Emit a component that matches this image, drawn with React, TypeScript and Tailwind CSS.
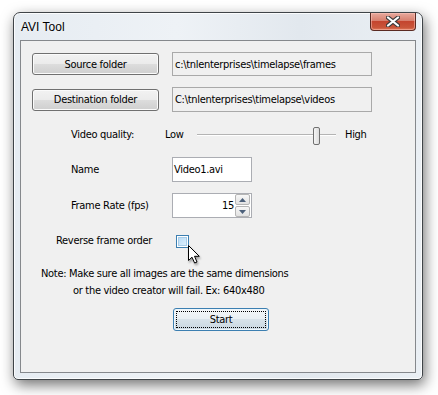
import React from "react";

const btn =
  "flex items-center justify-center pt-[2px] border border-[#707070] rounded-[3px] bg-[linear-gradient(#f2f2f2_0%,#ebebeb_50%,#dddddd_50%,#cfcfcf_100%)] shadow-[inset_0_0_0_1px_#fbfbfb] text-black";

function CloseGlyph() {
  return (
    <svg width="14" height="11" viewBox="0 0 14 11">
      <path
        d="M2 1.5 L12 9.5 M12 1.5 L2 9.5"
        stroke="#3a3a3a"
        strokeWidth="4.2"
        strokeLinecap="round"
        fill="none"
      />
      <path
        d="M2 1.5 L12 9.5 M12 1.5 L2 9.5"
        stroke="#ffffff"
        strokeWidth="2.2"
        strokeLinecap="round"
        fill="none"
      />
    </svg>
  );
}

function Cursor() {
  return (
    <svg
      width="16"
      height="22"
      viewBox="0 0 16 22"
      className="absolute left-[11px] top-[9px] drop-shadow-[1px_2px_1px_rgba(0,0,0,0.35)]"
    >
      <path
        d="M0.5 0.5 L0.5 15.5 L4 12.2 L6.6 18 L9 17 L6.5 11.3 L11.3 11.3 Z"
        fill="#ffffff"
        stroke="#000000"
        strokeWidth="1"
        strokeLinejoin="miter"
      />
    </svg>
  );
}

export default function App() {
  return (
    <div
      className="w-[438px] h-[395px] bg-white overflow-hidden pt-[12px] pl-[13px] text-[11px] tracking-[-0.3px] text-black"
      style={{ fontFamily: '"DejaVu Sans Condensed", "DejaVu Sans", sans-serif', fontStretch: "semi-condensed" }}
    >
      {/* Window */}
      <div className="w-[410px] h-[368px] flex flex-col border border-[#3f4448] rounded-t-[7px] rounded-b-[5px] bg-[linear-gradient(90deg,#e6ecf2_0%,#eef2f6_40%,#e2e8ee_70%,#eaeff4_100%)] shadow-[2px_5px_14px_rgba(0,0,0,0.55),inset_0_0_0_1px_rgba(255,255,255,0.8)] px-[6px]">
        {/* Title bar */}
        <div className="h-[27px] flex items-start justify-between">
          <div
            className="self-center pl-[1px] pt-[1px] text-[12px] leading-[14px] tracking-normal text-black [text-shadow:0_0_6px_#ffffff]"
            style={{ fontFamily: '"Liberation Sans", Arial, sans-serif', fontStretch: "normal" }}
          >
            AVI Tool
          </div>
          <div className="w-[46px] h-[18px] rounded-b-[4px] border border-t-0 border-[#5a2a22] bg-[linear-gradient(#e8a99d_0%,#d7806f_45%,#c4452f_50%,#c9553a_85%,#e07a5c_100%)] shadow-[inset_0_0_0_1px_rgba(255,200,190,0.5)] flex items-center justify-center">
            <CloseGlyph />
          </div>
        </div>

        {/* Client area */}
        <div className="w-[396px] h-[333px] border border-[#85888c] bg-[#f0f0f0] flex flex-col">
          {/* Row 1 */}
          <div className="mt-[11px] h-[24px] flex items-center">
            <div className={`${btn} ml-[11px] w-[127px] h-[22px]`}>Source folder</div>
            <div className="ml-[13px] w-[200px] h-[24px] border border-[#a9a9a9] bg-[#f0f0f0] flex items-center pl-[2px] pt-[2px]">
              c:\tnlenterprises\timelapse\frames
            </div>
          </div>
          {/* Row 2 */}
          <div className="mt-[11px] h-[25px] flex items-center">
            <div className={`${btn} ml-[11px] w-[127px] h-[22px]`}>Destination folder</div>
            <div className="ml-[13px] w-[200px] h-[25px] border border-[#a9a9a9] bg-[#f0f0f0] flex items-center pl-[2px] pt-[2px]">
              C:\tnlenterprises\timelapse\videos
            </div>
          </div>
          {/* Row 3: slider */}
          <div className="mt-[12px] h-[20px] flex items-center">
            <span className="ml-[50px] w-[94px] pt-[2px]">Video quality:</span>
            <span className="w-[32px] pt-[2px]">Low</span>
            <div className="relative w-[139px] h-[20px]">
              <div className="absolute left-0 right-0 top-[10px] h-[2px] border-t border-[#b4b4b4] border-b border-b-[#ffffff]" />
              <div className="absolute left-[116px] top-[3px] w-[7px] h-[18px] rounded-[2px] border border-[#707070] bg-[linear-gradient(90deg,#f4f4f4,#dcdcdc)]" />
            </div>
            <span className="ml-[9px] pt-[2px]">High</span>
          </div>
          {/* Row 4: Name */}
          <div className="mt-[13px] h-[25px] flex items-center">
            <span className="ml-[50px] w-[101px] pt-[2px]">Name</span>
            <div className="w-[80px] h-[25px] border border-[#abadb3] bg-white flex items-center pl-[1px] pt-[2px]">
              Video1.avi
            </div>
          </div>
          {/* Row 5: Frame rate */}
          <div className="mt-[11px] h-[25px] flex items-center">
            <span className="ml-[50px] w-[101px] pt-[2px]">Frame Rate (fps)</span>
            <div className="w-[80px] h-[25px] border border-[#abadb3] bg-white flex items-center">
              <span className="flex-1 text-right pr-[1px] pt-[2px]">15</span>
              <div className="w-[15px] h-[23px] flex flex-col gap-[1px] mr-[1px]">
                <div className="flex-1 border border-[#b5b5b5] rounded-[2px] bg-[linear-gradient(#f7f7f7,#e2e2e2)] flex items-center justify-center">
                  <svg width="7" height="4" viewBox="0 0 7 4">
                    <path d="M0 4 L3.5 0 L7 4 Z" fill="#4c607a" />
                  </svg>
                </div>
                <div className="flex-1 border border-[#b5b5b5] rounded-[2px] bg-[linear-gradient(#f7f7f7,#e2e2e2)] flex items-center justify-center">
                  <svg width="7" height="4" viewBox="0 0 7 4">
                    <path d="M0 0 L7 0 L3.5 4 Z" fill="#4c607a" />
                  </svg>
                </div>
              </div>
            </div>
          </div>
          {/* Row 6: checkbox */}
          <div className="mt-[13px] h-[18px] flex items-center">
            <span className="ml-[35px] w-[120px] pt-[2px]">Reverse frame order</span>
            <div className="relative w-[13px] h-[13px] mt-[2px] border border-[#3c7fb1] bg-white p-[1px]">
              <div className="w-full h-full bg-[linear-gradient(135deg,#b9dcf6,#dcf0fd)] border border-[#a8cde9]" />
              <Cursor />
            </div>
          </div>
          {/* Note */}
          <div className="mt-[17px] h-[16px] leading-[16px] ml-[20px] whitespace-nowrap">
            Note: Make sure all images are the same dimensions
          </div>
          <div className="mt-[1px] h-[16px] leading-[16px] ml-[52px] whitespace-nowrap">
            or the video creator will fail. Ex: 640x480
          </div>
          {/* Start */}
          <div className="mt-[9px] ml-[152px] w-[96px] h-[23px] border border-[#3c7fb1] rounded-[3px] bg-[linear-gradient(#f4f7f9_0%,#e9eff3_50%,#d8e3ea_50%,#c8d6e0_100%)] shadow-[inset_0_0_0_1px_#eef6fb] p-[2px]">
            <div className="w-full h-full border border-dotted border-black flex items-center justify-center pt-[2px]">
              Start
            </div>
          </div>
        </div>
      </div>
    </div>
  );
}
